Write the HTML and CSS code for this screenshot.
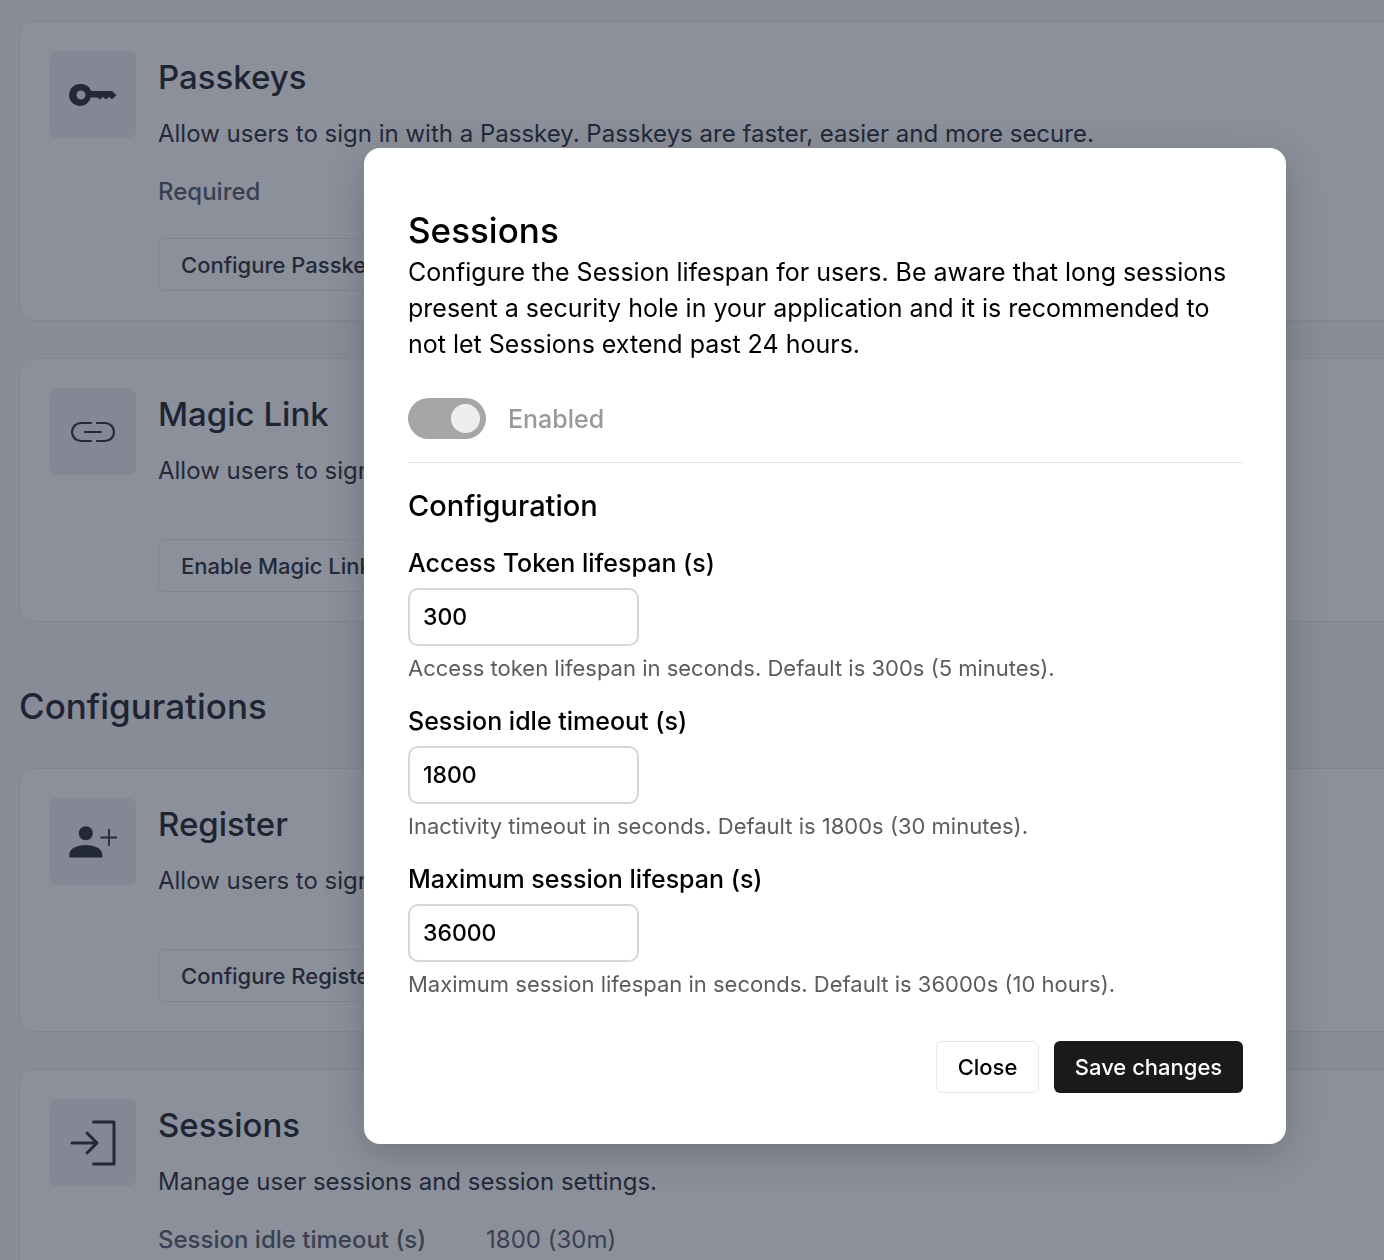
FILE: index.html
```html
<!DOCTYPE html>
<html lang="en">
<head>
    <meta charset="UTF-8">
    <meta name="viewport" content="width=device-width, initial-scale=1.0">
    <title>Sessions settings</title>
    <link rel="stylesheet" href="styles.css">
</head>
<body>
    <main class="page">
        <section class="card">
            <div class="card-icon">
                <svg viewBox="0 0 48 48" class="icon-fill"><path fill-rule="evenodd" d="M12 13a11 11 0 0 1 10.2 6.9H43l4.5 4.3-4.5 4-3-2.2-3 2.6-3-2.6-3 2.6-2.8-2.2h-6.5A11 11 0 1 1 12 13zm0 6.5a4.5 4.5 0 1 0 0 9 4.5 4.5 0 0 0 0-9z"/></svg>
            </div>
            <div class="card-body">
                <h3 class="card-title">Passkeys</h3>
                <p class="card-desc">Allow users to sign in with a Passkey. Passkeys are faster, easier and more secure.</p>
                <div class="card-meta"><span>Required</span></div>
                <button class="btn-outline">Configure Passkeys</button>
            </div>
        </section>

        <section class="card">
            <div class="card-icon">
                <svg viewBox="0 0 48 48" class="icon-stroke thin"><path d="M22 15H12a9 9 0 0 0 0 18h10M28 15h8a9 9 0 0 1 0 18h-8M16 24h16"/></svg>
            </div>
            <div class="card-body">
                <h3 class="card-title">Magic Link</h3>
                <p class="card-desc">Allow users to sign in with a link sent to their email.</p>
                <div class="card-meta"></div>
                <button class="btn-outline">Enable Magic Link</button>
            </div>
        </section>

        <h2 class="section-title">Configurations</h2>

        <section class="card">
            <div class="card-icon">
                <svg viewBox="0 0 48 48" class="icon-fill"><circle cx="16.8" cy="15.2" r="7"/><path d="M.3 39.5v-3c0-6 8-9.5 16.5-9.5s16.5 3.5 16.5 9.5v3z"/><path class="plus" d="M40 11v17M31.5 19.5h16.5"/></svg>
            </div>
            <div class="card-body">
                <h3 class="card-title">Register</h3>
                <p class="card-desc">Allow users to sign up to your application.</p>
                <div class="card-meta"></div>
                <button class="btn-outline">Configure Register</button>
            </div>
        </section>

        <section class="card">
            <div class="card-icon">
                <svg viewBox="0 0 48 48" class="icon-stroke"><path d="M24.5 3H45v42H24.5M3 24h25M18 14l10 10-10 10"/></svg>
            </div>
            <div class="card-body">
                <h3 class="card-title">Sessions</h3>
                <p class="card-desc">Manage user sessions and session settings.</p>
                <div class="card-meta"><span>Session idle timeout (s)</span><span class="meta-value">1800 (30m)</span></div>
                <button class="btn-outline">Configure Sessions</button>
            </div>
        </section>
    </main>

    <div class="overlay">
        <div class="modal">
            <h2 class="modal-title">Sessions</h2>
            <p class="modal-desc">Configure the Session lifespan for users. Be aware that long sessions present a security hole in your application and it is recommended to not let Sessions extend past 24 hours.</p>

            <div class="toggle-row">
                <span class="toggle"><span class="toggle-knob"></span></span>
                <span class="toggle-label">Enabled</span>
            </div>

            <h3 class="modal-subtitle">Configuration</h3>

            <div class="field">
                <label class="field-label">Access Token lifespan (s)</label>
                <input class="field-input" type="text" value="300">
                <p class="field-help">Access token lifespan in seconds. Default is 300s (5 minutes).</p>
            </div>
            <div class="field">
                <label class="field-label">Session idle timeout (s)</label>
                <input class="field-input" type="text" value="1800">
                <p class="field-help">Inactivity timeout in seconds. Default is 1800s (30 minutes).</p>
            </div>
            <div class="field">
                <label class="field-label">Maximum session lifespan (s)</label>
                <input class="field-input" type="text" value="36000">
                <p class="field-help">Maximum session lifespan in seconds. Default is 36000s (10 hours).</p>
            </div>

            <div class="modal-actions">
                <button class="btn-close">Close</button>
                <button class="btn-save">Save changes</button>
            </div>
        </div>
    </div>
</body>
</html>
```

FILE: styles.css
```css
* {
    box-sizing: border-box;
}
html, body {
    height: 100%;
}
body {
    margin: 0;
    height: 1260px;
    overflow: hidden;
    font-family: Inter, "Noto Sans", sans-serif;
    background: #f4f4f5;
}
h2, h3, p {
    margin: 0;
}
.page {
    width: 1500px;
    padding: 21px 0 0 19px;
}
.card {
    display: flex;
    gap: 22px;
    margin-bottom: 37px;
    padding: 29px;
    background: #fdfdfd;
    border: 1px solid #e6e7ea;
    border-radius: 14px;
}
.card-icon {
    flex: none;
    display: flex;
    align-items: center;
    justify-content: center;
    width: 87px;
    height: 87px;
    background: #ededf0;
    border-radius: 7px;
}
.card-icon svg {
    width: 48px;
    height: 48px;
    overflow: visible;
}
.icon-fill {
    fill: #2a2f3a;
}
.icon-fill .plus {
    fill: none;
    stroke: #2a2f3a;
    stroke-width: 1.8;
}
.icon-stroke {
    fill: none;
    stroke: #2a2f3a;
    stroke-width: 3;
    stroke-linecap: round;
    stroke-linejoin: round;
}
.icon-stroke.thin {
    stroke-width: 2.2;
}
.card-title {
    font-size: 33px;
    font-weight: 500;
    line-height: 44px;
    margin-top: 4px;
    color: #1f2430;
}
.card-desc {
    font-size: 24px;
    line-height: 36px;
    margin-top: 17px;
    color: #2a2f3a;
}
.card-meta {
    display: flex;
    gap: 60px;
    margin-top: 22px;
    font-size: 24px;
    line-height: 36px;
    font-weight: 500;
    color: #565c6c;
}
.meta-value {
    font-weight: 400;
}
.btn-outline {
    display: block;
    height: 53px;
    margin-top: 28px;
    padding: 0 22px;
    font: 500 22px Inter, "Noto Sans", sans-serif;
    color: #2a2f3a;
    background: none;
    border: 1px solid #e6e7ea;
    border-radius: 6px;
}
.section-title {
    font-size: 35px;
    font-weight: 500;
    line-height: 50px;
    margin: 59px 0 37px;
    color: #1f2430;
}

.overlay {
    position: fixed;
    inset: 0;
    display: flex;
    align-items: flex-start;
    justify-content: flex-end;
    padding: 148px 98px 0 0;
    background: rgba(28, 36, 56, 0.5);
}
.modal {
    width: 922px;
    height: 996px;
    padding: 60px 43px 0 44px;
    background: #fff;
    border-radius: 16px;
    box-shadow: 0 10px 40px rgba(0, 0, 0, 0.2);
    color: #000;
}
.modal-title {
    font-size: 35px;
    font-weight: 500;
    line-height: 44px;
}
.modal-desc {
    font-size: 25px;
    line-height: 36px;
    margin-top: 2px;
}
.toggle-row {
    display: flex;
    align-items: center;
    gap: 22px;
    margin-top: 36px;
    padding-bottom: 23px;
    border-bottom: 1px solid #e8e8ea;
}
.toggle {
    display: flex;
    align-items: center;
    justify-content: flex-end;
    width: 78px;
    height: 41px;
    padding-right: 6px;
    background: #a6a6a6;
    border-radius: 21px;
}
.toggle-knob {
    width: 29px;
    height: 29px;
    background: #eee;
    border-radius: 50%;
}
.toggle-label {
    font-size: 25px;
    font-weight: 500;
    color: #999;
}
.modal-subtitle {
    font-size: 29px;
    font-weight: 500;
    line-height: 40px;
    margin-top: 23px;
}
.field {
    margin-top: 19px;
}
.field-label {
    display: block;
    font-size: 25px;
    font-weight: 500;
    line-height: 36px;
}
.field-input {
    display: block;
    width: 231px;
    height: 58px;
    margin-top: 7px;
    padding: 0 13px;
    font: 500 23px Inter, "Noto Sans", sans-serif;
    color: #000;
    background: #fff;
    border: 2px solid #d6d6de;
    border-radius: 10px;
    outline: none;
}
.field-help {
    font-size: 22px;
    line-height: 32px;
    margin-top: 6px;
    color: #5c5c5c;
}
.modal-actions {
    display: flex;
    justify-content: flex-end;
    gap: 15px;
    margin-top: 41px;
}
.btn-close, .btn-save {
    height: 52px;
    font: 500 22px Inter, "Noto Sans", sans-serif;
    border-radius: 6px;
}
.btn-close {
    width: 103px;
    color: #000;
    background: #fff;
    border: 1px solid #e8e8ea;
}
.btn-save {
    width: 189px;
    color: #fff;
    background: #1a1a1c;
    border: none;
}
```
